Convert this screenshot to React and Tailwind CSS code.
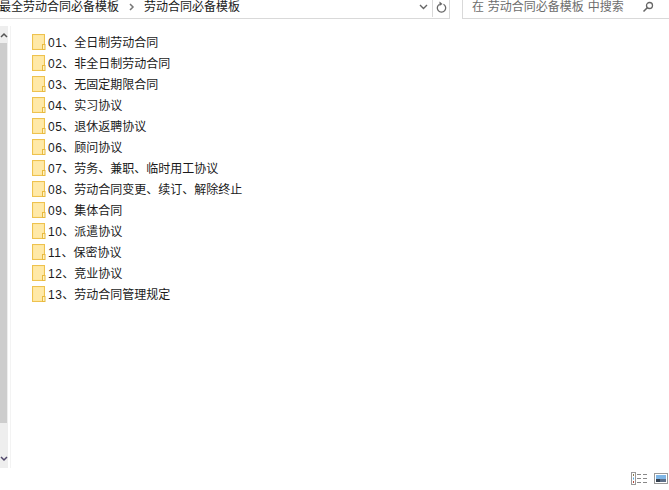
const folders = [
  "01、全日制劳动合同",
  "02、非全日制劳动合同",
  "03、无固定期限合同",
  "04、实习协议",
  "05、退休返聘协议",
  "06、顾问协议",
  "07、劳务、兼职、临时用工协议",
  "08、劳动合同变更、续订、解除终止",
  "09、集体合同",
  "10、派遣协议",
  "11、保密协议",
  "12、竞业协议",
  "13、劳动合同管理规定",
];

const fontStack = "font-['Liberation_Sans','Noto_Sans_CJK_SC',sans-serif]";

const FolderIcon = () => (
  <svg width="16" height="17" viewBox="0 0 16 17" className="shrink-0">
    <rect x="0.5" y="0.5" width="12" height="15" fill="#ffe596" stroke="#eec24f" />
    <rect x="1.5" y="1.5" width="10" height="13" fill="#ffe9a8" />
    <rect x="10.5" y="10.5" width="2.5" height="5" fill="#fff3c4" stroke="#e8b93e" />
  </svg>
);

const Scrollbar = () => (
  <div className="flex h-[442px] w-[8px] flex-col bg-[#eeeeee]">
    <div className="flex h-[17px] items-center justify-center">
      <svg width="8" height="6" viewBox="0 0 8 6">
        <path d="M1 5 L4 2 L7 5" fill="none" stroke="#555" strokeWidth="1.5" />
      </svg>
    </div>
    <div className="h-[380px] w-[7px] bg-[#cdcdcd]" />
    <div className="flex flex-1 items-end justify-center pb-[6px]">
      <svg width="8" height="6" viewBox="0 0 8 6">
        <path d="M1 1 L4 4 L7 1" fill="none" stroke="#50476a" strokeWidth="1.5" />
      </svg>
    </div>
  </div>
);

const ViewIcons = () => (
  <div className="flex items-start gap-[6px]">
    <svg width="17" height="13" viewBox="0 0 17 13">
      <rect x="0.5" y="0.5" width="4" height="12" fill="#fff" stroke="#999" />
      <rect x="2" y="2" width="1" height="2" fill="#8a7a50" />
      <rect x="2" y="5.5" width="1" height="2" fill="#4aa3e0" />
      <rect x="2" y="9" width="1" height="2" fill="#b5483a" />
      <path d="M6 2.5h4M12 2.5h4M6 6.5h4M12 6.5h4M6 10.5h4M12 10.5h4" stroke="#888" />
    </svg>
    <svg width="14" height="11" viewBox="0 0 14 11" className="mt-[1px]">
      <rect x="0.5" y="0.5" width="13" height="10" fill="#fff" stroke="#999" />
      <rect x="2" y="2" width="10" height="4" fill="#7fb6e6" />
      <rect x="2" y="6" width="10" height="3" fill="#5d6f88" />
      <rect x="2" y="6" width="4" height="3" fill="#34404f" />
    </svg>
  </div>
);

export default function App() {
  return (
    <div className={`flex h-[490px] w-[669px] flex-col overflow-hidden bg-white ${fontStack} text-[12px] text-[#1a1a1a]`}>
      <div className="flex h-[19px] shrink-0">
        <div className="flex h-full w-[450px] items-center overflow-hidden border-r border-b border-[#d9d9d9] pb-[4px]">
          <span className="-ml-[1px] whitespace-nowrap">最全劳动合同必备模板</span>
          <svg width="6" height="8" viewBox="0 0 6 8" className="mr-[9px] ml-[10px] shrink-0">
            <path d="M1 1 L4 4 L1 7" fill="none" stroke="#777" strokeWidth="1.5" />
          </svg>
          <span className="whitespace-nowrap">劳动合同必备模板</span>
          <div className="ml-auto flex h-[19px] w-[17px] items-center justify-center">
            <svg width="9" height="6" viewBox="0 0 9 6">
              <path d="M1 1 L4.5 4.5 L8 1" fill="none" stroke="#666" strokeWidth="1.4" />
            </svg>
          </div>
          <div className="flex h-[19px] w-[17px] items-center justify-center border-l border-[#d9d9d9]">
            <svg width="11" height="13" viewBox="0 0 11 13">
              <path d="M3.5 3.2 A4.2 4.2 0 1 0 7.5 3.2" fill="none" stroke="#666" strokeWidth="1.3" />
              <path d="M3.5 0.5 V5 L6.5 3Z" fill="#666" />
            </svg>
          </div>
        </div>
        <div className="ml-[12px] flex h-full flex-1 items-center border-b border-l border-[#d9d9d9] pb-[4px] pl-[9px] text-[#6d6d6d]">
          <span className="whitespace-nowrap [word-spacing:0.5px]">在 劳动合同必备模板 中搜索</span>
          <svg width="12" height="12" viewBox="0 0 12 12" className="ml-[18px] shrink-0">
            <circle cx="7.5" cy="4.5" r="3" fill="none" stroke="#666" strokeWidth="1.3" />
            <path d="M5.5 6.5 L1.5 10.5" stroke="#666" strokeWidth="1.6" />
          </svg>
        </div>
      </div>

      <div className="flex flex-1 pt-[7px]">
        <Scrollbar />
        <div className="ml-[2px] h-[442px] border-l border-[#f3f3f3]" />
        <ul className="ml-[21px] pt-[6px]">
          {folders.map((name) => (
            <li key={name} className="flex h-[21px] items-center">
              <FolderIcon />
              <span className="whitespace-nowrap">
                <span className="tracking-[0.5px]">{name.slice(0, 2)}</span>
                {name.slice(2)}
              </span>
            </li>
          ))}
        </ul>
      </div>

      <div className="flex h-[22px] shrink-0 items-start justify-end pt-[4px] pr-[1px]">
        <ViewIcons />
      </div>
    </div>
  );
}
